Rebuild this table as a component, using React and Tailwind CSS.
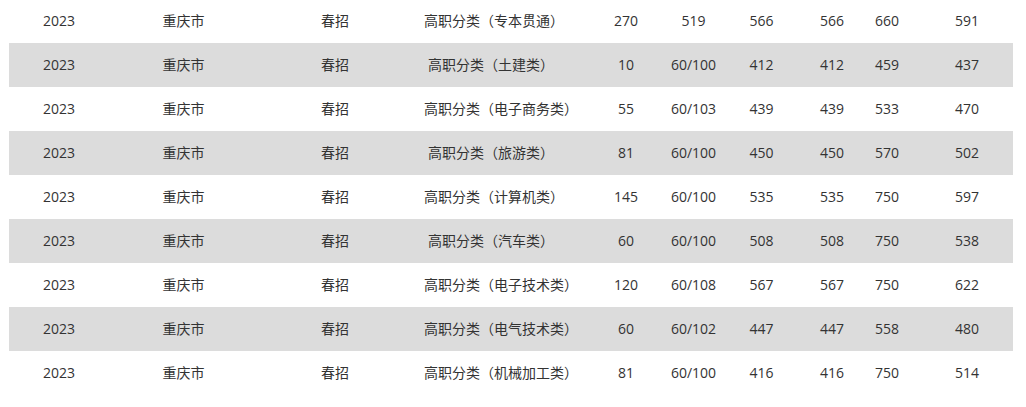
import React from "react";

const rows = [
  ["2023", "重庆市", "春招", "高职分类（专本贯通）", "270", "519", "566", "566", "660", "591"],
  ["2023", "重庆市", "春招", "高职分类（土建类）", "10", "60/100", "412", "412", "459", "437"],
  ["2023", "重庆市", "春招", "高职分类（电子商务类）", "55", "60/103", "439", "439", "533", "470"],
  ["2023", "重庆市", "春招", "高职分类（旅游类）", "81", "60/100", "450", "450", "570", "502"],
  ["2023", "重庆市", "春招", "高职分类（计算机类）", "145", "60/100", "535", "535", "750", "597"],
  ["2023", "重庆市", "春招", "高职分类（汽车类）", "60", "60/100", "508", "508", "750", "538"],
  ["2023", "重庆市", "春招", "高职分类（电子技术类）", "120", "60/108", "567", "567", "750", "622"],
  ["2023", "重庆市", "春招", "高职分类（电气技术类）", "60", "60/102", "447", "447", "558", "480"],
  ["2023", "重庆市", "春招", "高职分类（机械加工类）", "81", "60/100", "416", "416", "750", "514"],
];

// per-column padding so each value sits where the original table put it
const cellPad = [
  "pr-[12px]",
  "pr-[13px]",
  "pr-[2px]",
  "pl-[11px]",
  "pl-[34px]",
  "",
  "",
  "pl-[8px]",
  "pr-[13px]",
  "pr-[6px]",
];

export default function App() {
  return (
    <div className="w-[1026px] h-[407px] overflow-hidden bg-white">
      <div
        className="-mt-px ml-[9px] w-[1004px] text-[14px] text-[#333333]"
        style={{ fontFamily: '"Open Sans", "Noto Sans CJK SC", sans-serif' }}
      >
        {rows.map((row, i) => (
          <div
            key={i}
            className={`grid grid-cols-[112px_138px_154px_145px_102px_67px_69px_64px_67px_86px] h-[44px] items-center ${
              i % 2 === 1 ? "bg-[#dcdcdc]" : "bg-white"
            }`}
          >
            {row.map((cell, j) => (
              <div key={j} className={`text-center whitespace-nowrap pb-[2px] ${cellPad[j]}`}>
                {cell}
              </div>
            ))}
          </div>
        ))}
      </div>
    </div>
  );
}
